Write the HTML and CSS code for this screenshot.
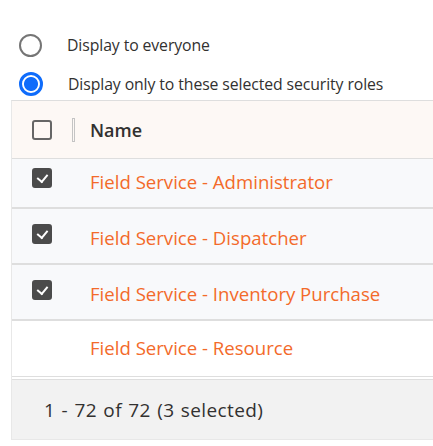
FILE: index.html
```html
<!DOCTYPE html>
<html lang="en">
<head>
    <meta charset="UTF-8">
    <title>Security roles</title>
    <link rel="stylesheet" href="styles.css">
</head>
<body>
    <div class="visibility">
        <label class="option">
            <span class="radio"></span>
            <span class="option__label">Display to everyone</span>
        </label>
        <label class="option">
            <span class="radio radio--checked"></span>
            <span class="option__label">Display only to these selected security roles</span>
        </label>
    </div>

    <div class="grid">
        <div class="grid__header">
            <div class="grid__select">
                <span class="check"></span>
                <span class="resizer"></span>
            </div>
            <div class="grid__title">Name</div>
        </div>

        <div class="grid__row grid__row--selected grid__row--first">
            <div class="grid__select"><span class="check check--on"></span></div>
            <a class="grid__name" href="#">Field Service - Administrator</a>
        </div>
        <div class="grid__row grid__row--selected">
            <div class="grid__select"><span class="check check--on"></span></div>
            <a class="grid__name" href="#">Field Service - Dispatcher</a>
        </div>
        <div class="grid__row grid__row--selected">
            <div class="grid__select"><span class="check check--on"></span></div>
            <a class="grid__name" href="#">Field Service - Inventory Purchase</a>
        </div>
        <div class="grid__row grid__row--last">
            <div class="grid__select"></div>
            <a class="grid__name" href="#">Field Service - Resource</a>
        </div>

        <div class="grid__footer">1 - 72 of 72 (3 selected)</div>
    </div>
</body>
</html>
```

FILE: styles.css
```css
:root {
    --text: #323130;
    --accent: #f36a2a;
    --blue: #0f6cfb;
    --line: #dedede;
    --font: 'Open Sans', 'Noto Sans', sans-serif;
}

* {
    box-sizing: border-box;
}

body {
    margin: 0;
    background: #fff;
    font-family: var(--font);
    color: var(--text);
    overflow: hidden;
}

/* Radio options */
.visibility {
    display: flex;
    flex-direction: column;
    gap: 15px;
    padding: 33px 0 0 19px;
}

.option {
    display: flex;
    align-items: center;
    height: 24px;
    cursor: pointer;
}

.radio {
    width: 23px;
    height: 23px;
    border: 2px solid #757575;
    border-radius: 50%;
    flex: none;
}

.radio--checked {
    width: 24px;
    height: 24px;
    border: 3px solid var(--blue);
    background: radial-gradient(circle, var(--blue) 0 6.5px, #fff 7.5px);
}

.option__label {
    margin-left: 25px;
    font-size: 15.8px;
    letter-spacing: -0.1px;
}

/* Roles grid */
.grid {
    margin: 4px 0 0 11px;
    border-left: 1px solid #e8e8e8;
    border-top: 1px solid var(--line);
    border-bottom: 1px solid #e8e8e8;
}

.grid__header,
.grid__row {
    display: flex;
    align-items: center;
}

.grid__header {
    height: 58px;
    background: #fdf8f5;
    border-bottom: 1px solid var(--line);
}

.grid__select {
    width: 78px;
    flex: none;
    display: flex;
    align-items: center;
    padding-left: 20px;
}

.check {
    width: 20px;
    height: 20px;
    border: 2px solid #666;
    border-radius: 3px;
    display: block;
}

.check--on {
    background: #4b4b4b;
    border-color: #4b4b4b;
    position: relative;
    margin-bottom: 5px;
}

.check--on::after {
    content: "";
    position: absolute;
    left: 5px;
    top: 2.5px;
    width: 4.5px;
    height: 8px;
    border: solid #fff;
    border-width: 0 2px 2px 0;
    transform: rotate(40deg);
}

.resizer {
    width: 3px;
    height: 24px;
    margin-left: 20px;
    border: 1px solid #c4c4c4;
}

.grid__title {
    font-size: 18px;
    font-weight: 600;
    color: var(--text);
}

.grid__row {
    height: 56px;
    border-bottom: 1px solid var(--line);
}

.grid__row--selected {
    background: #f8f9fb;
    border-bottom-width: 2px;
}

.grid__row--first {
    height: 50px;
    padding-bottom: 6px;
}

.grid__name {
    font-size: 18.6px;
    color: var(--accent);
    text-decoration: none;
    margin-top: 3px;
}

.grid__row--last .grid__name {
    margin-top: -3px;
}

.grid__footer {
    height: 60px;
    margin-top: 2px;
    border-top: 1px solid var(--line);
    background: #f2f2f2;
    display: flex;
    align-items: center;
    padding-left: 32px;
    font-size: 19px;
    letter-spacing: 0.4px;
    word-spacing: 1px;
    font-weight: 500;
    color: var(--text);
}
```
